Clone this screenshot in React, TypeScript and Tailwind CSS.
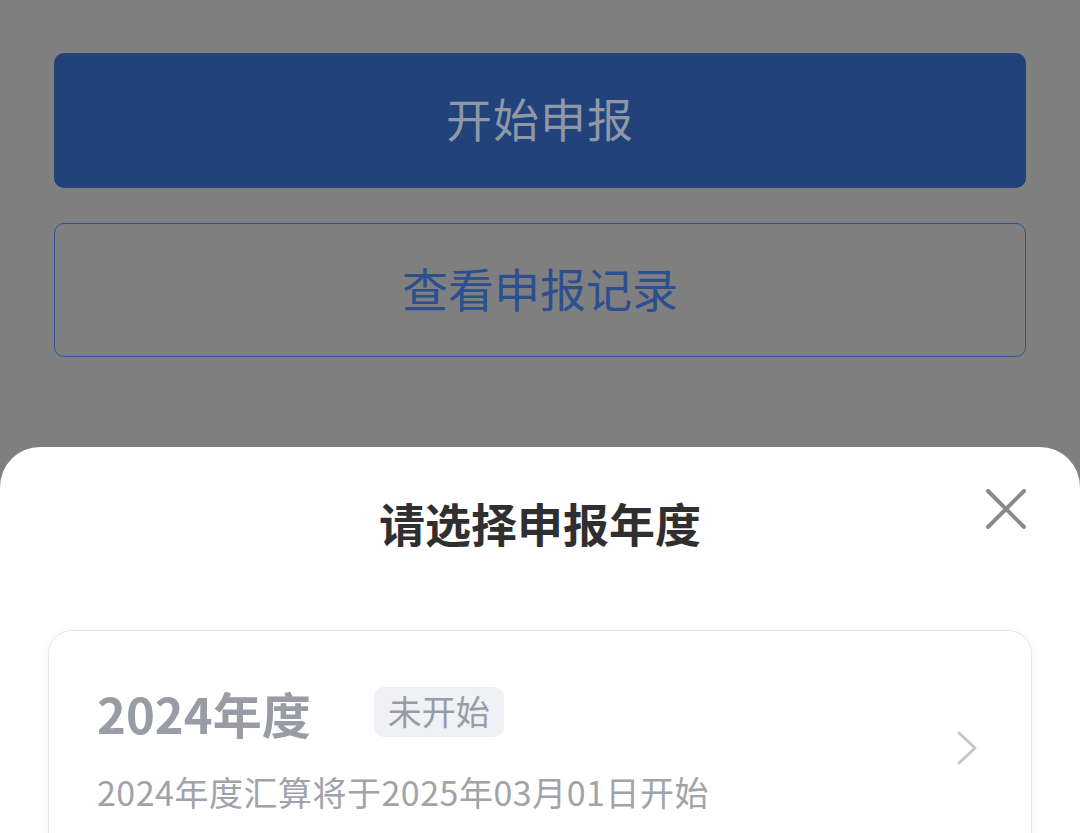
import React from "react";

/* =========================================================
   ICONS
========================================================= */

function CloseIcon() {
  return (
    <svg width="42" height="40" viewBox="0 0 42 40" fill="none">
      <path
        d="M3 2L39 38M39 2L3 38"
        stroke="#8a8a8a"
        strokeWidth="4"
        strokeLinecap="round"
      />
    </svg>
  );
}

function ChevronIcon() {
  return (
    <svg width="20" height="34" viewBox="0 0 20 34" fill="none">
      <path
        d="M2 2L18 17L2 32"
        stroke="#c4c6cc"
        strokeWidth="3"
        strokeLinecap="round"
        strokeLinejoin="round"
      />
    </svg>
  );
}

/* =========================================================
   COMPONENT
========================================================= */

export default function App() {
  return (
    <div
      className="flex h-[833px] w-[1080px] flex-col overflow-hidden bg-[#7f7f7f]"
      style={{ fontFamily: '"Noto Sans CJK SC", "Noto Sans", sans-serif' }}
    >
      {/* BUTTONS BEHIND THE OVERLAY */}

      <div className="flex flex-col gap-[35px] px-[54px] pt-[53px]">
        <button className="flex h-[135px] items-center justify-center rounded-[10px] bg-[#21427a] pb-[8px] text-[46px] leading-none tracking-[1px] text-[#8e98a6]">
          开始申报
        </button>

        <button className="flex h-[134px] items-center justify-center rounded-[10px] border-[1.5px] border-[#2d5394] pb-[6px] text-[46px] leading-none tracking-[0px] text-[#2b4f8f]">
          查看申报记录
        </button>
      </div>

      {/* BOTTOM SHEET */}

      <div className="mt-[90px] flex-1 rounded-t-[40px] bg-white">
        <div className="relative flex h-[183px] justify-center pt-[50px]">
          <h2 className="text-[46px] font-bold leading-[50px] text-[#2f2f2f]">
            请选择申报年度
          </h2>
          <button className="absolute right-[53px] top-[42px]">
            <CloseIcon />
          </button>
        </div>

        {/* YEAR CARD */}

        <div className="mx-[48px] flex h-[260px] items-start rounded-[24px] border border-[#e6e6e8] shadow-[0_0_8px_rgba(0,0,0,0.06)]">
          <div className="flex flex-1 flex-col pl-[48px] pt-[56px]">
            <div className="flex h-[50px] items-center">
              <span className="text-[49px] font-bold leading-none text-[#989ca4]">
                2024年度
              </span>
              <span className="ml-[63px] flex h-[50px] items-center rounded-[10px] bg-[#f0f1f4] px-[14px] pb-[3px] text-[34px] leading-none text-[#989ca4]">
                未开始
              </span>
            </div>
            <p className="mt-[35px] text-[34px] leading-[40px] tracking-[0.5px] text-[#a0a3a9]">
              2024年度汇算将于2025年03月01日开始
            </p>
          </div>
          <div className="mr-[54px] mt-[100px]">
            <ChevronIcon />
          </div>
        </div>
      </div>
    </div>
  );
}
